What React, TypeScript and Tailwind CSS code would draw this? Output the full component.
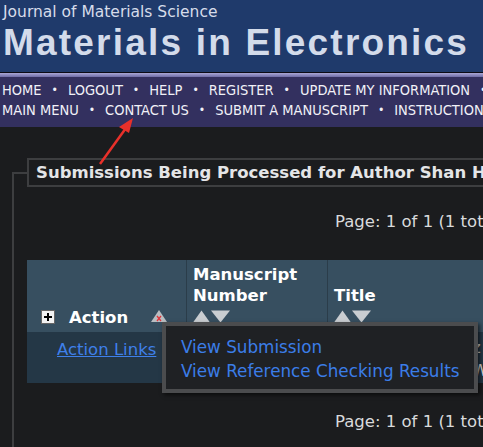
import React from "react";

const sans = { fontFamily: '"DejaVu Sans", Verdana, sans-serif' };

function SortArrows() {
  return (
    <svg width="38" height="13" viewBox="0 0 38 13">
      <polygon points="0,12.5 8.5,0.5 17,12.5" fill="#c9cdd1" />
      <polygon points="18,0.5 37,0.5 27.5,12.5" fill="#c9cdd1" />
    </svg>
  );
}

function ClearSort() {
  return (
    <svg width="18" height="14" viewBox="0 0 18 14">
      <polygon points="1,13 9,1 17,13" fill="#b9bdc1" />
      <path d="M7 7 L11 12 M11 7 L7 12" stroke="#e0333a" strokeWidth="1.3" />
    </svg>
  );
}

function PlusBox() {
  return (
    <svg width="14" height="14" viewBox="0 0 14 14">
      <rect x="0.5" y="0.5" width="13" height="13" fill="#f2f2f2" stroke="#666" />
      <path d="M3 7 H11 M7 3 V11" stroke="#000" strokeWidth="2" />
    </svg>
  );
}

const navRow1 = ["HOME", "LOGOUT", "HELP", "REGISTER", "UPDATE MY INFORMATION", ""];
const navRow2 = ["MAIN MENU", "CONTACT US", "SUBMIT A MANUSCRIPT", "INSTRUCTIONS FOR AUTHORS"];

function NavRow({ items }: { items: string[] }) {
  return (
    <div className="flex whitespace-nowrap h-[20px] leading-[20px]">
      {items.map((t, i) => (
        <span key={i} className="flex">
          {i > 0 && <span className="px-[10px] text-[12px]">•</span>}
          <span>{t}</span>
        </span>
      ))}
    </div>
  );
}

export default function App() {
  return (
    <div className="relative w-[483px] h-[447px] overflow-hidden bg-[#1b1c1e]" style={sans}>
      {/* banner */}
      <div className="h-[72px] bg-[#1f3a6b] pl-[3px] pt-[3px] whitespace-nowrap">
        <div className="text-[15.5px] leading-[19px] text-[#d6dcea]">Journal of Materials Science</div>
        <div
          className="text-[37px] leading-[42px] font-bold text-[#d3dbea] tracking-[2.2px]"
          style={{ fontFamily: '"Liberation Sans", Arial, sans-serif' }}
        >
          Materials in Electronics
        </div>
      </div>
      <div className="h-px bg-[#0b0b14]" />
      <div className="h-[4px] bg-gradient-to-b from-[#a9a7d6] to-[#6f6ca6]" />
      <div
        className="h-[50px] bg-[#33305f] text-[#f1f1f7] text-[14.5px] pl-[2px] pt-[3px]"
        style={{ fontFamily: '"DejaVu Sans Condensed", Tahoma, sans-serif' }}
      >
        <NavRow items={navRow1} />
        <NavRow items={navRow2} />
      </div>

      {/* content */}
      <div className="pl-[12px] pt-[31px]">
        <fieldset className="border-2 border-[#3d3e40] pl-[13px] w-[700px] h-[400px]">
          <legend className="border-2 border-[#3d3e40] pl-[7px] pr-[10px] h-[29px] leading-[25px] text-[16.5px] font-bold text-[#e4e5e7] whitespace-nowrap">
            Submissions Being Processed for Author Shan Hu
          </legend>
          <div className="h-[73px] pl-[308px] pt-[25px] text-[16.5px] leading-[20px] text-[#d9dadc] whitespace-nowrap">
            Page: 1 of 1 (1 total submissions)
          </div>

          <div className="relative">
            {/* header */}
            <div className="flex h-[72px] bg-[#374f60] text-white font-bold text-[16.5px]">
              <div className="w-[160px] flex items-end pb-[4px] pl-[14px] border-r border-[#2b3d4a]">
                <span className="mb-[4px]">
                  <PlusBox />
                </span>
                <span className="ml-[14px] leading-[20px]">Action</span>
                <span className="ml-[22px] mb-[5px]">
                  <ClearSort />
                </span>
              </div>
              <div className="w-[141px] flex flex-col justify-end pb-[9px] pl-[6px] border-r border-[#2b3d4a]">
                <div className="leading-[21px]">Manuscript</div>
                <div className="leading-[21px]">Number</div>
                <div className="mt-[4px]">
                  <SortArrows />
                </div>
              </div>
              <div className="flex-1 flex flex-col justify-end pb-[9px] pl-[6px]">
                <div className="leading-[21px]">Title</div>
                <div className="mt-[4px]">
                  <SortArrows />
                </div>
              </div>
            </div>
            {/* row */}
            <div className="flex h-[51px] bg-[#243746] text-[16.5px]">
              <div className="w-[160px] pl-[30px] pt-[6px]">
                <a className="text-[#3f80ea] underline leading-[20px]">Action Links</a>
              </div>
              <div className="w-[141px]" />
              <div className="flex-1 pl-[144px] pt-[4px] text-[#d9dadc] leading-[23px] whitespace-nowrap">
                <div>z</div>
                <div>W</div>
              </div>
            </div>

            {/* action links popup */}
            <div className="absolute left-[135px] top-[62px] w-[316px] h-[71px] border-4 border-[#4b4c4e] bg-[#1f2124] pl-[15px] pt-[9px] text-[16.8px] leading-[24px] text-[#3b7de8] whitespace-nowrap shadow-[2px_2px_4px_rgba(0,0,0,0.6)]">
              <div>View Submission</div>
              <div>View Reference Checking Results</div>
            </div>
          </div>

          <div className="pl-[308px] pt-[29px] text-[16.5px] leading-[20px] text-[#d9dadc] whitespace-nowrap">
            Page: 1 of 1 (1 total submissions)
          </div>
        </fieldset>
      </div>

      {/* red arrow annotation */}
      <svg className="absolute left-0 top-0 pointer-events-none" width="483" height="447">
        <line x1="100" y1="164" x2="126" y2="128" stroke="#e8302a" strokeWidth="2.5" />
        <polygon points="133,118 119,127 129,133" fill="#e8302a" />
      </svg>
    </div>
  );
}
